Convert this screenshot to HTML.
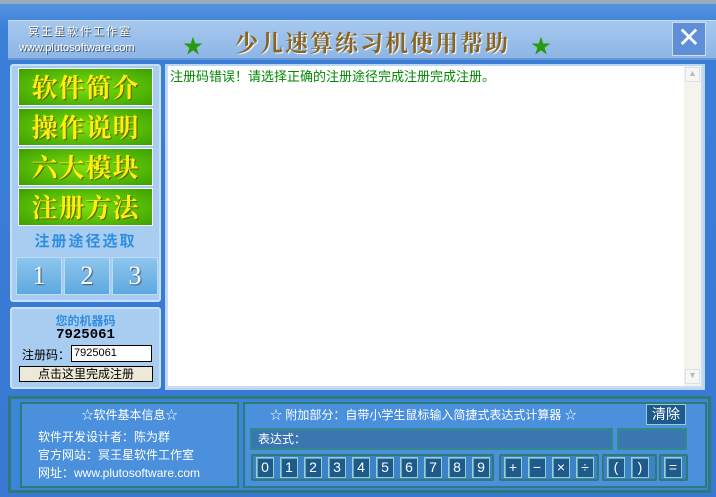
<!DOCTYPE html>
<html><head><meta charset="utf-8"><style>
*{margin:0;padding:0;box-sizing:border-box}
body{width:716px;height:497px;overflow:hidden;background:linear-gradient(180deg,#5a96e0 0,#3b7fd8 30px,#3878d2 100%);font-family:"Liberation Sans","Noto Sans CJK SC",sans-serif;position:relative}
.abs{position:absolute}
.hdr{left:8px;top:20px;width:708px;height:40px;background:linear-gradient(180deg,#a6c8ee,#8db6e6);border-top:1px solid #c4dcf6;border-bottom:2px solid #6a98d6}
.panel{background:#a9cdf0;border:2px solid #c6e0f8;border-radius:3px}
.gb{left:18px;width:135px;height:38px;background:radial-gradient(ellipse at 50% 50%,#7ee010,#3aa000);border:1px solid #fff;color:#ffee10;font-family:"Noto Serif CJK SC",serif;font-weight:bold;font-size:26px;text-align:center;line-height:36px;text-shadow:1px 1px 1px #5a5a00;letter-spacing:1px}
.nb{top:257px;width:46px;height:38px;background:linear-gradient(180deg,#8ec6ee,#5ea8e0);border:1px solid #b8dcf6;color:#fff;font-family:"Liberation Serif",serif;font-size:26px;text-align:center;line-height:36px;text-shadow:1px 1px 1px #456}
.kb{top:457px;width:18px;height:21px;background:#1e5a8c;border:1px solid #9cc;color:#fff;font-size:14px;text-align:center;line-height:19px;box-shadow:inset 1px 1px 0 #6ab}
.kg{top:454px;height:27px;border:2px solid #2f7a78;background:#3c82c6;border-radius:2px}
</style></head><body>
<div class="abs" style="left:0;top:0;width:716px;height:4px;background:#9ab"></div>
<div class="abs hdr"></div>
<div class="abs" style="left:28px;top:23px;font-size:11px;color:#fff;letter-spacing:2px;text-shadow:1px 1px 0 #456">冥王星软件工作室</div>
<div class="abs" style="left:19px;top:42px;font-size:11px;color:#fff;text-shadow:1px 1px 0 #456">www.plutosoftware.com</div>
<div class="abs" style="left:183px;top:30px;color:#2a9a10;font-size:20px">★</div>
<div class="abs" style="left:531px;top:30px;color:#2a9a10;font-size:20px">★</div>
<div class="abs" style="left:235px;top:25px;font-family:'Noto Serif CJK SC',serif;font-weight:bold;font-size:23px;color:#8a6420;letter-spacing:2px;text-shadow:1px 1px 1px #fff">少儿速算练习机使用帮助</div>
<div class="abs" style="left:672px;top:22px;width:34px;height:34px;background:#5f8fd6;border:1px solid #cde;color:#fff;font-size:28px;line-height:30px;text-align:center">✕</div>

<div class="abs panel" style="left:10px;top:64px;width:151px;height:238px"></div>
<div class="abs gb" style="top:68px">软件简介</div>
<div class="abs gb" style="top:108px">操作说明</div>
<div class="abs gb" style="top:148px">六大模块</div>
<div class="abs gb" style="top:188px">注册方法</div>
<div class="abs" style="left:18px;top:230px;width:135px;text-align:center;color:#2e8ee0;font-weight:bold;font-size:15px;letter-spacing:2px">注册途径选取</div>
<div class="abs nb" style="left:16px">1</div>
<div class="abs nb" style="left:64px">2</div>
<div class="abs nb" style="left:112px">3</div>

<div class="abs panel" style="left:10px;top:307px;width:151px;height:82px"></div>
<div class="abs" style="left:10px;top:312px;width:151px;text-align:center;color:#2e8ee0;font-weight:bold;font-size:12px">您的机器码</div>
<div class="abs" style="left:10px;top:327px;width:151px;text-align:center;color:#000;font-weight:bold;font-size:14px;font-family:'Liberation Mono',monospace">7925061</div>
<div class="abs" style="left:22px;top:346px;font-size:12px">注册码：</div>
<div class="abs" style="left:71px;top:345px;width:81px;height:17px;background:#fff;border:1px solid #000;font-size:11px;padding-left:2px;line-height:15px">7925061</div>
<div class="abs" style="left:19px;top:366px;width:134px;height:16px;background:#ece9d8;border:1px solid #000;font-size:12px;text-align:center;line-height:14px">点击这里完成注册</div>

<div class="abs" style="left:165px;top:64px;width:540px;height:326px;background:#cde;border:2px solid #b9d7f0"></div>
<div class="abs" style="left:168px;top:66px;width:516px;height:320px;background:#fff;color:#080;font-size:13px;padding:0 2px">注册码错误！请选择正确的注册途径完成注册完成注册。</div>
<div class="abs" style="left:684px;top:66px;width:17px;height:320px;background:#f4f3ee"></div>
<div class="abs" style="left:685px;top:67px;width:15px;height:15px;border:1px solid #dde;background:#f6f6f2;color:#bbb;font-size:9px;text-align:center">▲</div>
<div class="abs" style="left:685px;top:369px;width:15px;height:15px;border:1px solid #dde;background:#f6f6f2;color:#bbb;font-size:9px;text-align:center">▼</div>

<div class="abs" style="left:8px;top:396px;width:703px;height:97px;border:3px solid #2f7a78;background:#3a86d8"></div>
<div class="abs" style="left:20px;top:402px;width:219px;height:86px;border:2px solid #2f7a78;background:#4a90dc"></div>
<div class="abs" style="left:20px;top:406px;width:219px;text-align:center;color:#fff;font-size:12px">☆软件基本信息☆</div>
<div class="abs" style="left:38px;top:428px;color:#fff;font-size:12px;line-height:18px">软件开发设计者：陈为群<br>官方网站：冥王星软件工作室<br>网址：www.plutosoftware.com</div>
<div class="abs" style="left:243px;top:402px;width:464px;height:86px;border:2px solid #2f7a78;background:#4a90dc"></div>
<div class="abs" style="left:270px;top:406px;color:#fff;font-size:12px">☆ 附加部分：自带小学生鼠标输入简捷式表达式计算器 ☆</div>
<div class="abs" style="left:646px;top:404px;width:40px;height:21px;background:#1e5a8c;border:1px solid #9cc;color:#fff;font-size:14px;text-align:center;line-height:19px">清除</div>
<div class="abs" style="left:250px;top:428px;width:363px;height:22px;background:#3a76b0;border:2px solid #2f8a88;color:#fff;font-size:12px;padding-left:6px;line-height:18px">表达式：</div>
<div class="abs" style="left:617px;top:428px;width:70px;height:22px;background:#3a76b0;border:2px solid #2f8a88"></div>
<div class="abs kg" style="left:251px;width:243px"></div>
<div class="abs kg" style="left:499px;width:100px"></div>
<div class="abs kg" style="left:602px;width:55px"></div>
<div class="abs kg" style="left:659px;width:29px"></div>
<div class="abs kb" style="left:256px">0</div><div class="abs kb" style="left:280px">1</div><div class="abs kb" style="left:304px">2</div><div class="abs kb" style="left:328px">3</div><div class="abs kb" style="left:352px">4</div><div class="abs kb" style="left:376px">5</div><div class="abs kb" style="left:400px">6</div><div class="abs kb" style="left:424px">7</div><div class="abs kb" style="left:448px">8</div><div class="abs kb" style="left:472px">9</div>
<div class="abs kb" style="left:504px">+</div><div class="abs kb" style="left:528px">−</div><div class="abs kb" style="left:552px">×</div><div class="abs kb" style="left:576px">÷</div>
<div class="abs kb" style="left:607px">(</div><div class="abs kb" style="left:631px">)</div>
<div class="abs kb" style="left:664px">=</div>
</body></html>
